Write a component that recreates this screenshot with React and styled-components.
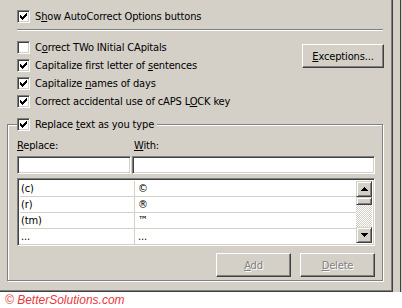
import React from "react";
import styled, { createGlobalStyle } from "styled-components";

const GlobalStyle = createGlobalStyle`
  html, body {
    margin: 0;
    padding: 0;
    background: #fff;
  }
  body {
    font-family: "DejaVu Sans Condensed", "Liberation Sans", sans-serif;
    font-size: 11px;
    letter-spacing: -0.15px;
    color: #000;
  }
`;

const Screen = styled.div`
  width: 402px;
  height: 308px;
  overflow: hidden;
  background: #fff;
`;

const Dialog = styled.div`
  display: flex;
  height: 292px;
  background: #d4d0c8;
`;

const TabPage = styled.div`
  box-sizing: border-box;
  width: 393px;
  height: 292px;
  border-right: 1px solid #404040;
  border-bottom: 1px solid #404040;
  box-shadow: inset -1px -1px 0 #808080;
  padding: 10px 0 0 7px;
  display: flex;
  flex-direction: column;
  align-items: flex-start;
`;

const Gutter = styled.div`
  width: 7px;
`;

const FrameEdge = styled.div`
  width: 1px;
  background: #404040;
`;

const CheckRow = styled.label`
  display: flex;
  align-items: center;
  gap: 5px;
  height: 13px;
  line-height: 13px;
  white-space: nowrap;
  margin-left: ${(p) => p.$indent || 0}px;
`;

const Box = styled.span`
  box-sizing: border-box;
  width: 13px;
  height: 13px;
  flex: none;
  background: #fff;
  border: 1px solid;
  border-color: #808080 #fff #fff #808080;
  box-shadow: inset 1px 1px 0 #404040, inset -1px -1px 0 #d4d0c8;
  display: flex;
  align-items: center;
  justify-content: center;
`;

const Separator = styled.div`
  width: 366px;
  margin: 6px 0 0 10px;
  border-top: 1px solid #808080;
  border-bottom: 1px solid #fff;
`;

const Options = styled.div`
  width: 367px;
  margin: 10px 0 0 10px;
  display: flex;
  justify-content: space-between;
  align-items: flex-start;
`;

const OptionList = styled.div`
  display: flex;
  flex-direction: column;
  gap: 5px;
`;

const PushButton = styled.button`
  box-sizing: border-box;
  width: ${(p) => p.$w}px;
  height: 24px;
  margin-top: ${(p) => p.$top || 0}px;
  padding: 0;
  background: #d4d0c8;
  border: 1px solid;
  border-color: #fff #404040 #404040 #fff;
  box-shadow: inset -1px -1px 0 #808080;
  font: inherit;
  letter-spacing: inherit;
  color: ${(p) => (p.disabled ? "#808080" : "#000")};
  text-shadow: ${(p) => (p.disabled ? "1px 1px 0 #fff" : "none")};
`;

const GroupBox = styled.div`
  box-sizing: border-box;
  width: 376px;
  height: 157px;
  margin-top: 16px;
  border: 1px solid #808080;
  box-shadow: inset 1px 1px 0 #fff, 1px 1px 0 #fff;
  padding: 0 7px 3px 9px;
  display: flex;
  flex-direction: column;
`;

const Legend = styled(CheckRow)`
  align-self: flex-start;
  margin-top: -7px;
  padding-right: 3px;
  background: #d4d0c8;
`;

const FieldGrid = styled.div`
  display: grid;
  grid-template-columns: 114px 243px;
  column-gap: 1px;
  margin-top: ${(p) => p.$top}px;
`;

const FieldLabel = styled.span`
  line-height: 13px;
  padding-left: ${(p) => p.$pad || 0}px;
`;

const Sunken = styled.div`
  box-sizing: border-box;
  background: #fff;
  border: 1px solid;
  border-color: #808080 #fff #fff #808080;
  box-shadow: inset 1px 1px 0 #404040, inset -1px -1px 0 #d4d0c8;
`;

const TextBox = styled(Sunken)`
  height: 18px;
`;

const ListBox = styled(Sunken)`
  height: 68px;
  margin-top: 4px;
  padding: 2px;
  display: flex;
`;

const Rows = styled.div`
  flex: 1;
  display: flex;
  flex-direction: column;
`;

const Row = styled.div`
  display: grid;
  grid-template-columns: 114px 1px 1fr;
  height: 16px;
  line-height: 15px;
  & + & {
    border-top: 1px solid #d4d0c8;
    height: 15px;
  }
`;

const Cell = styled.span`
  padding-left: ${(p) => p.$pad}px;
  white-space: nowrap;
`;

const ColLine = styled.span`
  background: #d4d0c8;
`;

const ScrollBar = styled.div`
  width: 16px;
  display: flex;
  flex-direction: column;
`;

const Raised = styled.div`
  box-sizing: border-box;
  width: 16px;
  height: ${(p) => p.$h}px;
  flex: none;
  background: #d4d0c8;
  border: 1px solid;
  border-color: #d4d0c8 #404040 #404040 #d4d0c8;
  box-shadow: inset 1px 1px 0 #fff, inset -1px -1px 0 #808080;
  display: flex;
  align-items: center;
  justify-content: center;
`;

const Track = styled.div`
  flex: 1;
  background: repeating-conic-gradient(#fff 0 25%, #d4d0c8 0 50%) 0 0 / 2px 2px;
`;

const ButtonRow = styled.div`
  display: flex;
  justify-content: flex-end;
  gap: 9px;
  margin-top: 7px;
`;

const Copyright = styled.div`
  padding: 1px 0 0 5px;
  font-family: "Liberation Sans", Arial, sans-serif;
  font-style: italic;
  font-size: 12px;
  line-height: 14px;
  letter-spacing: 0;
  color: #e8383d;
`;

const checkCols = [2, 3, 4, 3, 2, 1, 0];

const CheckMark = () => (
  <svg width="7" height="7" viewBox="0 0 7 7" shapeRendering="crispEdges">
    {checkCols.map((y, x) => (
      <rect key={x} x={x} y={y} width="1" height="3" fill="#000" />
    ))}
  </svg>
);

const CheckBox = ({ checked }) => <Box>{checked && <CheckMark />}</Box>;

const Arrow = ({ down }) => (
  <svg width="7" height="4" viewBox="0 0 7 4" shapeRendering="crispEdges">
    <polygon
      points={down ? "0,0 7,0 3.5,4" : "3.5,0 7,4 0,4"}
      fill="#000"
    />
  </svg>
);

const options = [
  { checked: false, label: <>C<u>o</u>rrect TWo INitial CApitals</> },
  { checked: true, label: <>Capitalize first letter of <u>s</u>entences</> },
  { checked: true, label: <>Capitalize <u>n</u>ames of days</> },
  { checked: true, label: <>Correct accidental use of cAPS L<u>O</u>CK key</> },
];

const entries = [
  ["(c)", "©"],
  ["(r)", "®"],
  ["(tm)", "™"],
  ["...", "..."],
];

export default function App() {
  return (
    <Screen>
      <GlobalStyle />
      <Dialog>
        <TabPage>
          <CheckRow $indent={10}>
            <CheckBox checked />
            <span>
              S<u>h</u>ow AutoCorrect Options buttons
            </span>
          </CheckRow>
          <Separator />
          <Options>
            <OptionList>
              {options.map((o, i) => (
                <CheckRow key={i}>
                  <CheckBox checked={o.checked} />
                  <span>{o.label}</span>
                </CheckRow>
              ))}
            </OptionList>
            <PushButton $w={82} $top={3}>
              <u>E</u>xceptions...
            </PushButton>
          </Options>
          <GroupBox>
            <Legend>
              <CheckBox checked />
              <span>
                Replace <u>t</u>ext as you type
              </span>
            </Legend>
            <FieldGrid $top={8}>
              <FieldLabel>
                <u>R</u>eplace:
              </FieldLabel>
              <FieldLabel $pad={2}>
                <u>W</u>ith:
              </FieldLabel>
            </FieldGrid>
            <FieldGrid $top={4}>
              <TextBox />
              <TextBox />
            </FieldGrid>
            <ListBox>
              <Rows>
                {entries.map(([from, to]) => (
                  <Row key={from}>
                    <Cell $pad={1}>{from}</Cell>
                    <ColLine />
                    <Cell $pad={3}>{to}</Cell>
                  </Row>
                ))}
              </Rows>
              <ScrollBar>
                <Raised $h={16}>
                  <Arrow />
                </Raised>
                <Raised $h={8} />
                <Track />
                <Raised $h={16}>
                  <Arrow down />
                </Raised>
              </ScrollBar>
            </ListBox>
            <ButtonRow>
              <PushButton $w={75} disabled>
                <u>A</u>dd
              </PushButton>
              <PushButton $w={75} disabled>
                <u>D</u>elete
              </PushButton>
            </ButtonRow>
          </GroupBox>
        </TabPage>
        <Gutter />
        <FrameEdge />
      </Dialog>
      <Copyright>© BetterSolutions.com</Copyright>
    </Screen>
  );
}
